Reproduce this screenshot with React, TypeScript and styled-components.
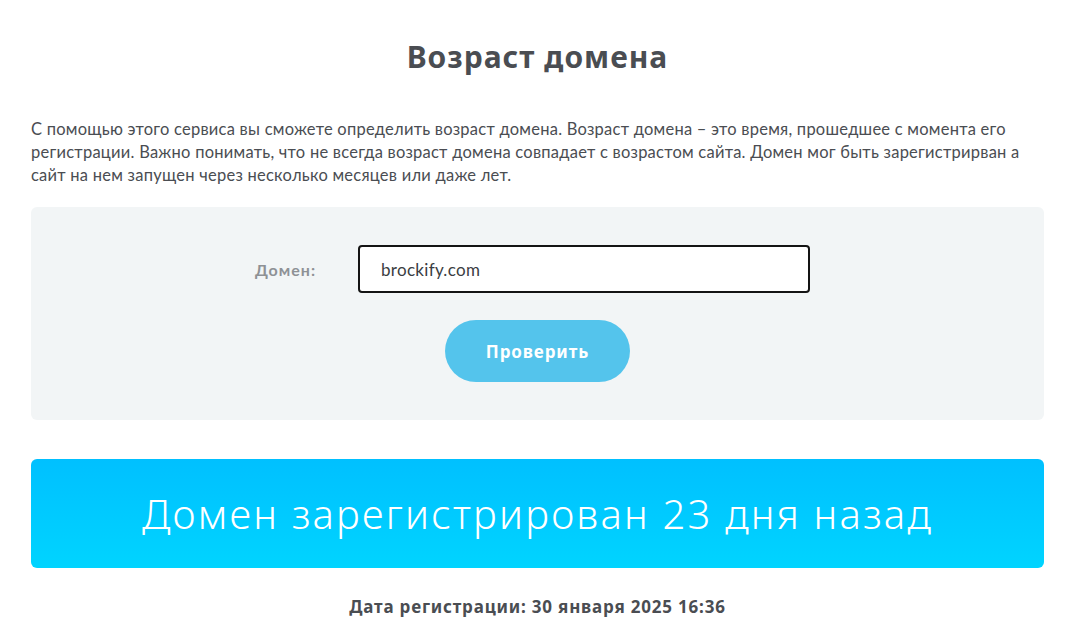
import styled, { createGlobalStyle } from "styled-components";

const GlobalStyle = createGlobalStyle`
  body {
    margin: 0;
    background: #ffffff;
    font-family: "Lato", "Noto Sans", sans-serif;
  }
`;

export default function App() {
  return (
    <>
      <GlobalStyle />
      <Page>
        <Title>Возраст домена</Title>
        <Intro>
          С помощью этого сервиса вы сможете определить возраст домена. Возраст домена – это время, прошедшее с момента его
          <br />
          регистрации. Важно понимать, что не всегда возраст домена совпадает с возрастом сайта. Домен мог быть зарегистрирван а
          <br />
          сайт на нем запущен через несколько месяцев или даже лет.
        </Intro>

        <FormPanel>
          <FieldRow>
            <FieldLabel htmlFor="domain">Домен:</FieldLabel>
            <DomainInput id="domain" defaultValue="brockify.com" />
          </FieldRow>
          <CheckButton type="button">Проверить</CheckButton>
        </FormPanel>

        <ResultBanner>Домен зарегистрирован 23 дня назад</ResultBanner>

        <RegDate>Дата регистрации: 30 января 2025 16:36</RegDate>
      </Page>
    </>
  );
}

const Page = styled.main`
  width: 1013px;
  margin-left: 31px;
  display: flex;
  flex-direction: column;
`;

const Title = styled.h1`
  margin: 39px 0 0;
  text-align: center;
  font-family: "Noto Sans", sans-serif;
  font-size: 30px;
  line-height: 36px;
  font-weight: 700;
  letter-spacing: 1px;
  color: #4a4d52;
`;

const Intro = styled.p`
  margin: 43px 0 0;
  font-family: "Lato", sans-serif;
  font-size: 16.5px;
  line-height: 23px;
  letter-spacing: 0.24px;
  color: #4a4d52;
  white-space: nowrap;
`;

const FormPanel = styled.section`
  margin-top: 20px;
  background: #f2f5f6;
  border-radius: 6px;
  padding: 38px 0;
  display: flex;
  flex-direction: column;
  align-items: center;
`;

const FieldRow = styled.div`
  align-self: stretch;
  display: flex;
  align-items: center;
  gap: 42px;
  padding-left: 185px;
`;

const FieldLabel = styled.label`
  width: 100px;
  text-align: right;
  font-family: "Lato", sans-serif;
  font-size: 16px;
  font-weight: 700;
  letter-spacing: 1px;
  color: #8e9195;
`;

const DomainInput = styled.input`
  box-sizing: border-box;
  width: 452px;
  height: 48px;
  border: 2px solid #141414;
  border-radius: 4px;
  background: #ffffff;
  padding: 0 21px;
  font-family: "Lato", sans-serif;
  font-size: 17px;
  letter-spacing: 0.3px;
  color: #3a3d42;
  outline: none;
`;

const CheckButton = styled.button`
  margin-top: 27px;
  width: 185px;
  height: 62px;
  border: none;
  border-radius: 31px;
  background: #54c4ec;
  color: #ffffff;
  font-family: "Noto Sans", sans-serif;
  font-size: 17px;
  font-weight: 700;
  letter-spacing: 0.9px;
  cursor: pointer;
`;

const ResultBanner = styled.div`
  margin-top: 39px;
  height: 109px;
  border-radius: 6px;
  background: linear-gradient(180deg, #00c0ff 0%, #00d4ff 100%);
  display: flex;
  align-items: center;
  justify-content: center;
  font-family: "Noto Sans", sans-serif;
  font-size: 40px;
  font-weight: 300;
  letter-spacing: 2.2px;
  color: #ffffff;
`;

const RegDate = styled.div`
  margin-top: 29px;
  text-align: center;
  font-family: "Noto Sans", sans-serif;
  font-size: 17px;
  line-height: 20px;
  font-weight: 700;
  letter-spacing: 0.8px;
  color: #4a4d52;
`;
